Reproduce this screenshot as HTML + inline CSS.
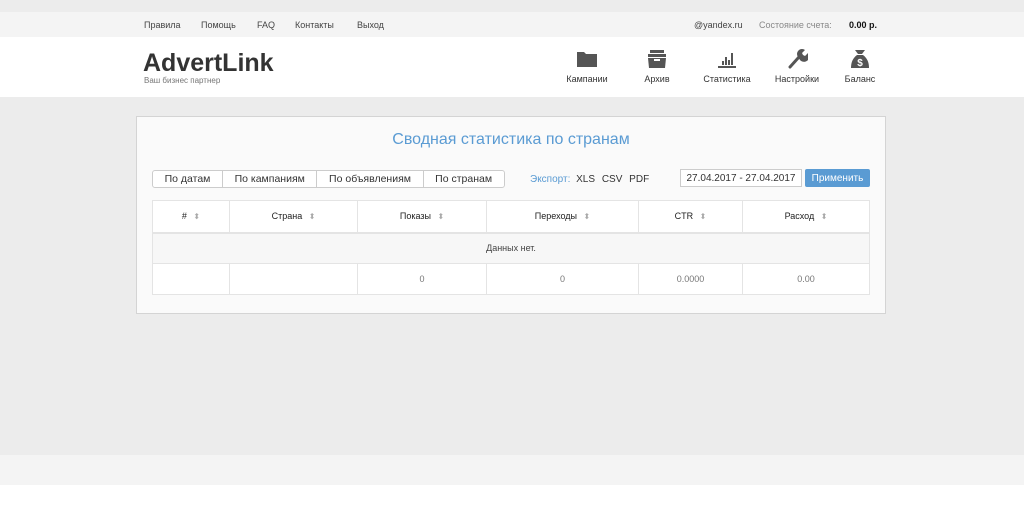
<!DOCTYPE html><html><head><meta charset="utf-8"><style>
*{box-sizing:border-box;margin:0;padding:0}
body{width:1024px;height:510px;background:#fff;font-family:"Liberation Sans",sans-serif;position:relative;overflow:hidden;color:#333}
.abs{position:absolute}
.top{top:0;left:0;width:1024px;height:12px;background:#ececec}
.nav{top:12px;left:0;width:1024px;height:25px;background:#f4f4f4;font-size:9px;color:#444}
.nav span{position:absolute;top:8px}
.hdr{top:37px;left:0;width:1024px;height:60px;background:#fff}
.main{top:97px;left:0;width:1024px;height:358px;background:#ececec}
.foot{top:455px;left:0;width:1024px;height:30px;background:#f4f4f4}
.ic{position:absolute;top:49px;width:60px;text-align:center;font-size:9px;color:#333}
.ic svg{display:block;margin:0 auto 5px}
.panel{left:136px;top:116px;width:750px;height:198px;background:#fafafa;border:1px solid #d4d4d4}
.btns{left:152px;top:170px;height:18px;border:1px solid #ccc;border-radius:3px;background:#fff;display:flex;font-size:10.5px}
.btns div{padding:0 11.6px;line-height:16px;border-right:1px solid #ccc}
.btns div:last-child{border:none}
table{position:absolute;left:152px;top:200px;width:718px;border-collapse:collapse;font-size:9px;color:#444;background:#fff}
td{border:1px solid #e4e4e4;text-align:center}
th{border:1px solid #e4e4e4;border-bottom:2px solid #e4e4e4;font-weight:normal;height:32px;color:#222}
th i{font-style:normal;color:#aaa;font-size:8px;margin-left:4px}
</style></head><body>
<div class="abs top"></div>
<div class="abs nav">
<span style="left:144px">Правила</span><span style="left:201px">Помощь</span><span style="left:257px">FAQ</span><span style="left:295px">Контакты</span><span style="left:357px">Выход</span>
<span style="left:694px">@yandex.ru</span><span style="left:759px;color:#888">Состояние счета:</span><span style="left:849px;color:#111;font-weight:bold">0.00 р.</span>
</div>
<div class="abs hdr">
<div class="abs" style="left:143px;top:12px;font-size:25px;font-weight:bold;color:#333">AdvertLink</div>
<div class="abs" style="left:144px;top:39px;font-size:8px;color:#777">Ваш бизнес партнер</div>
</div>
<div class="ic" style="left:557px"><svg width="22" height="20" viewBox="0 0 22 20"><path d="M1 3h7l2 2h11v13H1z" fill="#555"/></svg>Кампании</div>
<div class="ic" style="left:627px"><svg width="22" height="20" viewBox="0 0 22 20"><rect x="4" y="1" width="14" height="3" fill="#555"/><rect x="2" y="5" width="18" height="3" fill="#555"/><path d="M2 9h18l-1 10H3z" fill="#555"/><rect x="8" y="10" width="6" height="2" fill="#fff"/></svg>Архив</div>
<div class="ic" style="left:697px"><svg width="22" height="20" viewBox="0 0 22 20"><rect x="2" y="17" width="18" height="2" fill="#555"/><rect x="6" y="12" width="2" height="4" fill="#555"/><rect x="9" y="8" width="2" height="8" fill="#555"/><rect x="12" y="11" width="2" height="5" fill="#555"/><rect x="15" y="4" width="2" height="12" fill="#555"/></svg>Статистика</div>
<div class="ic" style="left:767px"><svg width="22" height="20" viewBox="0 0 22 20"><path d="M4 18L13 8" stroke="#555" stroke-width="3" stroke-linecap="round"/><path d="M12 8a5 5 0 0 1 7-7l-3 3 1 2 2 1 3-3a5 5 0 0 1-8 7z" fill="#555"/></svg>Настройки</div>
<div class="ic" style="left:830px"><svg width="22" height="20" viewBox="0 0 22 20"><path d="M6 1h10l-3 4h-4z" fill="#555"/><path d="M8 6h6c4 3 6 7 6 13H2c0-6 2-10 6-13z" fill="#555"/><text x="11" y="17" font-size="10" font-weight="bold" fill="#fff" text-anchor="middle" font-family="Liberation Sans">$</text></svg>Баланс</div>
<div class="abs main"></div>
<div class="abs foot"></div>
<div class="abs panel"></div>
<div class="abs" style="left:136px;width:750px;top:131px;text-align:center;font-size:16px;color:#5a9bd3">Сводная статистика по странам</div>
<div class="abs btns"><div>По датам</div><div>По кампаниям</div><div>По объявлениям</div><div>По странам</div></div>
<div class="abs" style="left:530px;top:174px;font-size:10px;color:#5a9bd3">Экспорт: <span style="color:#333;margin-left:3px">XLS</span> <span style="color:#333;margin-left:4px">CSV</span> <span style="color:#333;margin-left:4px">PDF</span></div>
<div class="abs" style="left:680px;top:169px;width:122px;height:18px;border:1px solid #ccc;background:#fff;font-size:10px;line-height:17px;text-align:center">27.04.2017 - 27.04.2017</div>
<div class="abs" style="left:805px;top:169px;width:65px;height:18px;background:#5a9bd3;border-radius:2px;color:#fff;font-size:10px;line-height:19px;text-align:center">Применить</div>
<table>
<tr><th style="width:77px"># <i>⬍</i></th><th style="width:128px">Страна <i>⬍</i></th><th style="width:129px">Показы <i>⬍</i></th><th style="width:152px">Переходы <i>⬍</i></th><th style="width:104px">CTR <i>⬍</i></th><th>Расход <i>⬍</i></th></tr>
<tr><td colspan="6" style="height:31px;background:#f7f7f7">Данных нет.</td></tr>
<tr style="height:31px;color:#777"><td></td><td></td><td>0</td><td>0</td><td>0.0000</td><td>0.00</td></tr>
</table>
</body></html>
